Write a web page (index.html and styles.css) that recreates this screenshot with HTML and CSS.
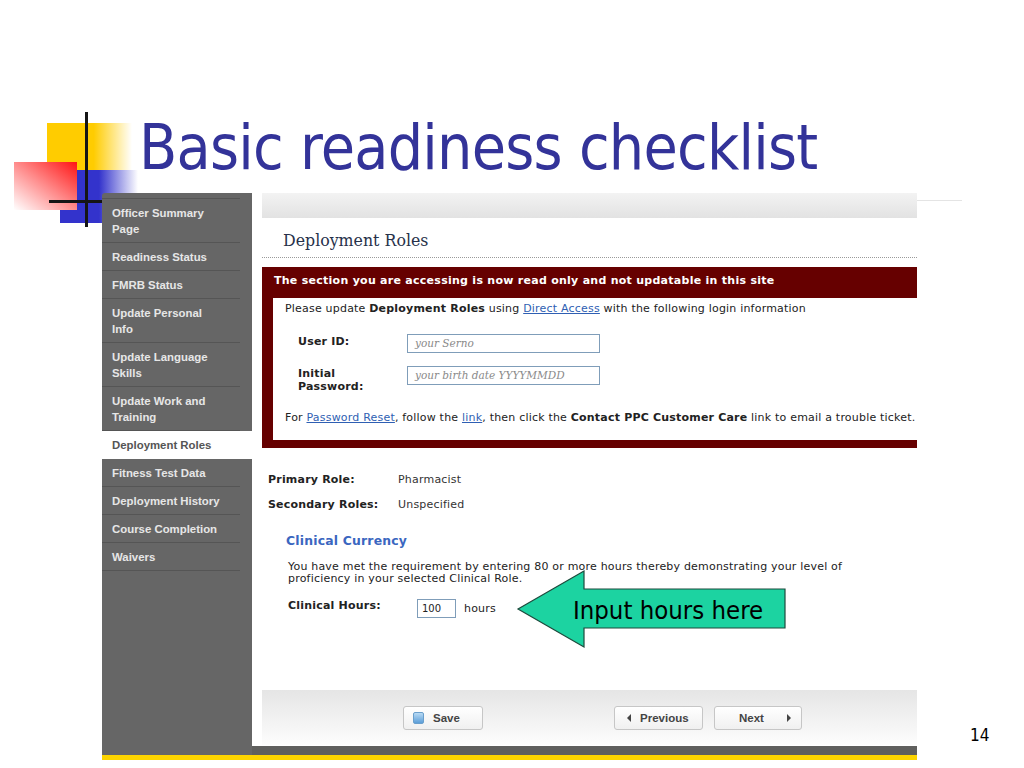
FILE: index.html
```html
<!DOCTYPE html>
<html>
<head>
<meta charset="utf-8">
<link rel="stylesheet" href="styles.css">
</head>
<body>
<div class="slide">
  <div class="logo">
    <div class="sq sq-yellow"></div>
    <div class="sq sq-blue"></div>
    <div class="sq sq-red"></div>
    <div class="sq line-v"></div>
    <div class="sq line-h"></div>
  </div>
  <div class="rule"></div>

  <h1 class="title">Basic readiness checklist</h1>

  <div class="shot">
    <div class="shot-row">
      <nav class="side">
        <ul class="side-list">
          <li class="nav-item">Officer Summary<br>Page</li>
          <li class="nav-item">Readiness Status</li>
          <li class="nav-item">FMRB Status</li>
          <li class="nav-item">Update Personal<br>Info</li>
          <li class="nav-item">Update Language<br>Skills</li>
          <li class="nav-item">Update Work and<br>Training</li>
          <li class="nav-item active">Deployment Roles</li>
          <li class="nav-item">Fitness Test Data</li>
          <li class="nav-item">Deployment History</li>
          <li class="nav-item">Course Completion</li>
          <li class="nav-item">Waivers</li>
        </ul>
      </nav>
      <div class="main">
        <div class="main-inner">
          <div class="topbar"></div>
          <h2 class="page-h">Deployment Roles</h2>
          <div class="notice">
            <div class="notice-head">The section you are accessing is now read only and not updatable in this site</div>
            <div class="notice-body">
              <p>Please update <b>Deployment Roles</b> using <a class="lnk">Direct Access</a> with the following login information</p>
              <div class="login">
                <div class="login-row">
                  <div class="lbl">User ID:</div>
                  <div class="field">your Serno</div>
                </div>
                <div class="login-row">
                  <div class="lbl">Initial<br>Password:</div>
                  <div class="field">your birth date YYYYMMDD</div>
                </div>
              </div>
              <p class="reset">For <a class="lnk">Password Reset</a>, follow the <a class="lnk">link</a>, then click the <b>Contact PPC Customer Care</b> link to email a trouble ticket.</p>
            </div>
          </div>

          <div class="roles">
            <div class="role-row"><span class="role-label">Primary Role:</span><span class="role-val">Pharmacist</span></div>
            <div class="role-row"><span class="role-label">Secondary Roles:</span><span class="role-val">Unspecified</span></div>
          </div>

          <section class="clinical">
            <h3 class="clin-h">Clinical Currency</h3>
            <p class="clin-p">You have met the requirement by entering 80 or more hours thereby demonstrating your level of proficiency in your selected Clinical Role.</p>
            <div class="hours-row">
              <span class="hours-lbl">Clinical Hours:</span>
              <span class="hours-inp">100</span>
              <span class="hours-unit">hours</span>
            </div>
          </section>

          <div class="btnbar">
            <div class="btn btn-save"><span class="save-ico"></span><span>Save</span></div>
            <div class="btn btn-prev"><span class="tri-l"></span><span>Previous</span></div>
            <div class="btn btn-next"><span>Next</span><span class="tri-r"></span></div>
          </div>
        </div>
        <div class="darkbar"></div>
      </div>
    </div>
    <div class="yellow"></div>
  </div>

  <div class="callout">
    <svg class="callout-svg" width="273" height="82" viewBox="0 0 273 82">
      <polygon points="3,40 69,2 69,20 270,20 270,59 69,59 69,78" fill="#1cd3a1" stroke="#1d4a3c" stroke-width="1.2" stroke-linejoin="miter"/>
    </svg>
    <span class="callout-text">Input hours here</span>
  </div>

  <div class="pagenum">14</div>
</div>
</body>
</html>
```

FILE: styles.css
```css
* { box-sizing: border-box; }
html, body { margin: 0; padding: 0; background: #fff; }

.slide { position: relative; width: 1024px; height: 768px; overflow: hidden; background: #fff; }

/* slide decoration */
.logo { position: absolute; left: 0; top: 0; width: 140px; height: 230px; }
.sq { position: absolute; }
.sq-yellow { left: 47px; top: 123px; width: 85px; height: 47px;
  background: linear-gradient(to right, #ffcc00 0%, #ffcc00 55%, rgba(255,255,255,0) 100%); }
.sq-blue { left: 60px; top: 170px; width: 78px; height: 53px;
  background: linear-gradient(to right, #3333cc 0%, #3333cc 50%, rgba(255,255,255,0) 100%); }
.sq-red { left: 14px; top: 162px; width: 63px; height: 48px;
  background: linear-gradient(to bottom left, #ff1414 0%, #ff8c8c 50%, #ffffff 100%); }
.line-v { left: 85px; top: 112px; width: 3px; height: 115px; background: #151515; }
.line-h { left: 49px; top: 200px; width: 60px; height: 3px; background: #151515; }
.rule { position: absolute; left: 917px; top: 200px; width: 45px; height: 1px; background: #e4e4e4; }

.title { margin: 0; height: 193px; padding: 112px 0 0 139px;
  font-family: "DejaVu Sans Condensed", "DejaVu Sans", sans-serif; font-stretch: condensed;
  font-size: 62px; line-height: 72px; letter-spacing: -0.75px; font-weight: normal; color: #333399; white-space: nowrap; }

/* screenshot */
.shot { position: relative; margin-left: 102px; width: 815px; }
.shot-row { display: flex; }

.side { width: 150px; background: #666; padding-top: 5px; border-top-left-radius: 3px; }
.side-list { list-style: none; margin: 0; padding: 1px 0 0;
  background: linear-gradient(#555, #555) left top / 138px 1px no-repeat; }
.nav-item { padding: 6px 10px 6px;
  font-family: "Liberation Sans", Arial, sans-serif; font-weight: bold; font-size: 11.4px; line-height: 16px;
  color: #e6e6e6; white-space: nowrap;
  background: linear-gradient(#555, #555) left bottom / 138px 1px no-repeat; }
.nav-item.active { background: #fff; color: #555; }

.main { width: 665px; background: #fff; display: flex; flex-direction: column; }
.main-inner { height: 553px; padding-left: 10px; display: flex; flex-direction: column;
  font-family: "DejaVu Sans", Verdana, sans-serif; font-size: 11px; letter-spacing: 0.2px; color: #222; }
.darkbar { height: 9px; background: #5f5f5d; }
.yellow { height: 5px; background: #fcd400; }

.topbar { height: 25px; background: linear-gradient(#f3f3f3, #e2e2e2); }
.page-h { margin: 0; padding: 13px 0 6px 21px; border-bottom: 1px dotted #9a9a9a;
  font-family: "DejaVu Serif", Georgia, serif; font-weight: normal; font-size: 15.8px; line-height: 20px; letter-spacing: 0; color: #27314a; }

.notice { margin-top: 9px; background: #660000; padding: 0 0 8px 11px; }
.notice-head { padding: 7px 0 11px 1px; font-weight: bold; font-size: 11px; line-height: 13px; letter-spacing: 0.27px; color: #fff; white-space: nowrap; }
.notice-body { background: #fff; padding: 4px 0 15px 12px; line-height: 14px; }
.notice-body p { margin: 0; white-space: nowrap; }
.lnk { color: #2f5fb3; text-decoration: underline; }
.login { margin-top: 18px; }
.login-row { display: flex; align-items: flex-start; padding-left: 13px; }
.login-row + .login-row { margin-top: 13px; }
.lbl { width: 109px; padding-top: 1px; font-weight: bold; line-height: 13px; }
.field { width: 193px; height: 19px; border: 1px solid #7f9db9; padding-left: 7px; letter-spacing: 0;
  font-family: "DejaVu Serif", Georgia, serif; font-style: italic; font-size: 10.5px; line-height: 17px; color: #8a8a8a; }
.notice-body .reset { margin-top: 18px; }

.roles { margin-top: 25px; padding-left: 6px; }
.role-row { display: flex; line-height: 14px; }
.role-row + .role-row { margin-top: 11px; }
.role-label { width: 130px; font-weight: bold; }
.role-val { color: #333; }

.clinical { padding-left: 24px; }
.clin-h { margin: 21px 0 0; font-size: 12.4px; line-height: 16px; font-weight: bold; color: #3a66c0; }
.clin-p { margin: 12px 0 0; padding-left: 2px; max-width: 590px; line-height: 12px; }
.hours-row { margin-top: 14px; padding-left: 2px; display: flex; align-items: flex-start; }
.hours-lbl { width: 129px; font-weight: bold; line-height: 14px; }
.hours-inp { width: 39px; height: 19px; border: 1px solid #7f9db9; padding-left: 4px; font-size: 10px; letter-spacing: 0; line-height: 17px; }
.hours-unit { margin-left: 8px; line-height: 19px; }

.btnbar { margin-top: auto; margin-bottom: 1px; height: 55px; display: flex; align-items: flex-start;
  padding: 16px 0 0 141px; background: linear-gradient(#e5e5e5, #fdfdfd); letter-spacing: 0; }
.btn { height: 24px; display: flex; align-items: center; border: 1px solid #c6c6c6; border-radius: 3px;
  background: linear-gradient(#ffffff, #f0f0f0);
  font-family: "Liberation Sans", Arial, sans-serif; font-weight: bold; font-size: 11.5px; color: #444; }
.btn-save { width: 80px; padding-left: 9px; }
.save-ico { width: 11px; height: 12px; margin-right: 9px; border-radius: 2px;
  background: linear-gradient(#b8daf4, #5c9ed8); border: 1px solid #6a9fcc; }
.btn-prev { width: 89px; margin-left: 131px; padding-left: 12px; }
.tri-l { width: 0; height: 0; border-top: 4px solid transparent; border-bottom: 4px solid transparent;
  border-right: 4px solid #444; margin-right: 9px; }
.btn-next { width: 88px; margin-left: 11px; padding-left: 24px; }
.tri-r { width: 0; height: 0; border-top: 4px solid transparent; border-bottom: 4px solid transparent;
  border-left: 4px solid #444; margin-left: 23px; }

/* callout arrow */
.callout { position: absolute; left: 515px; top: 569px; width: 273px; height: 82px;
  display: flex; align-items: center; padding-left: 58px; }
.callout-svg { position: absolute; left: 0; top: 0; }
.callout-text { position: relative; font-family: "DejaVu Sans Condensed", "DejaVu Sans", sans-serif; font-stretch: condensed;
  font-size: 25.5px; line-height: 30px; color: #000; white-space: nowrap; }

.pagenum { position: absolute; left: 970px; top: 725px;
  font-family: "DejaVu Sans Condensed", "DejaVu Sans", sans-serif; font-stretch: condensed; font-size: 17px; color: #000; }
```
